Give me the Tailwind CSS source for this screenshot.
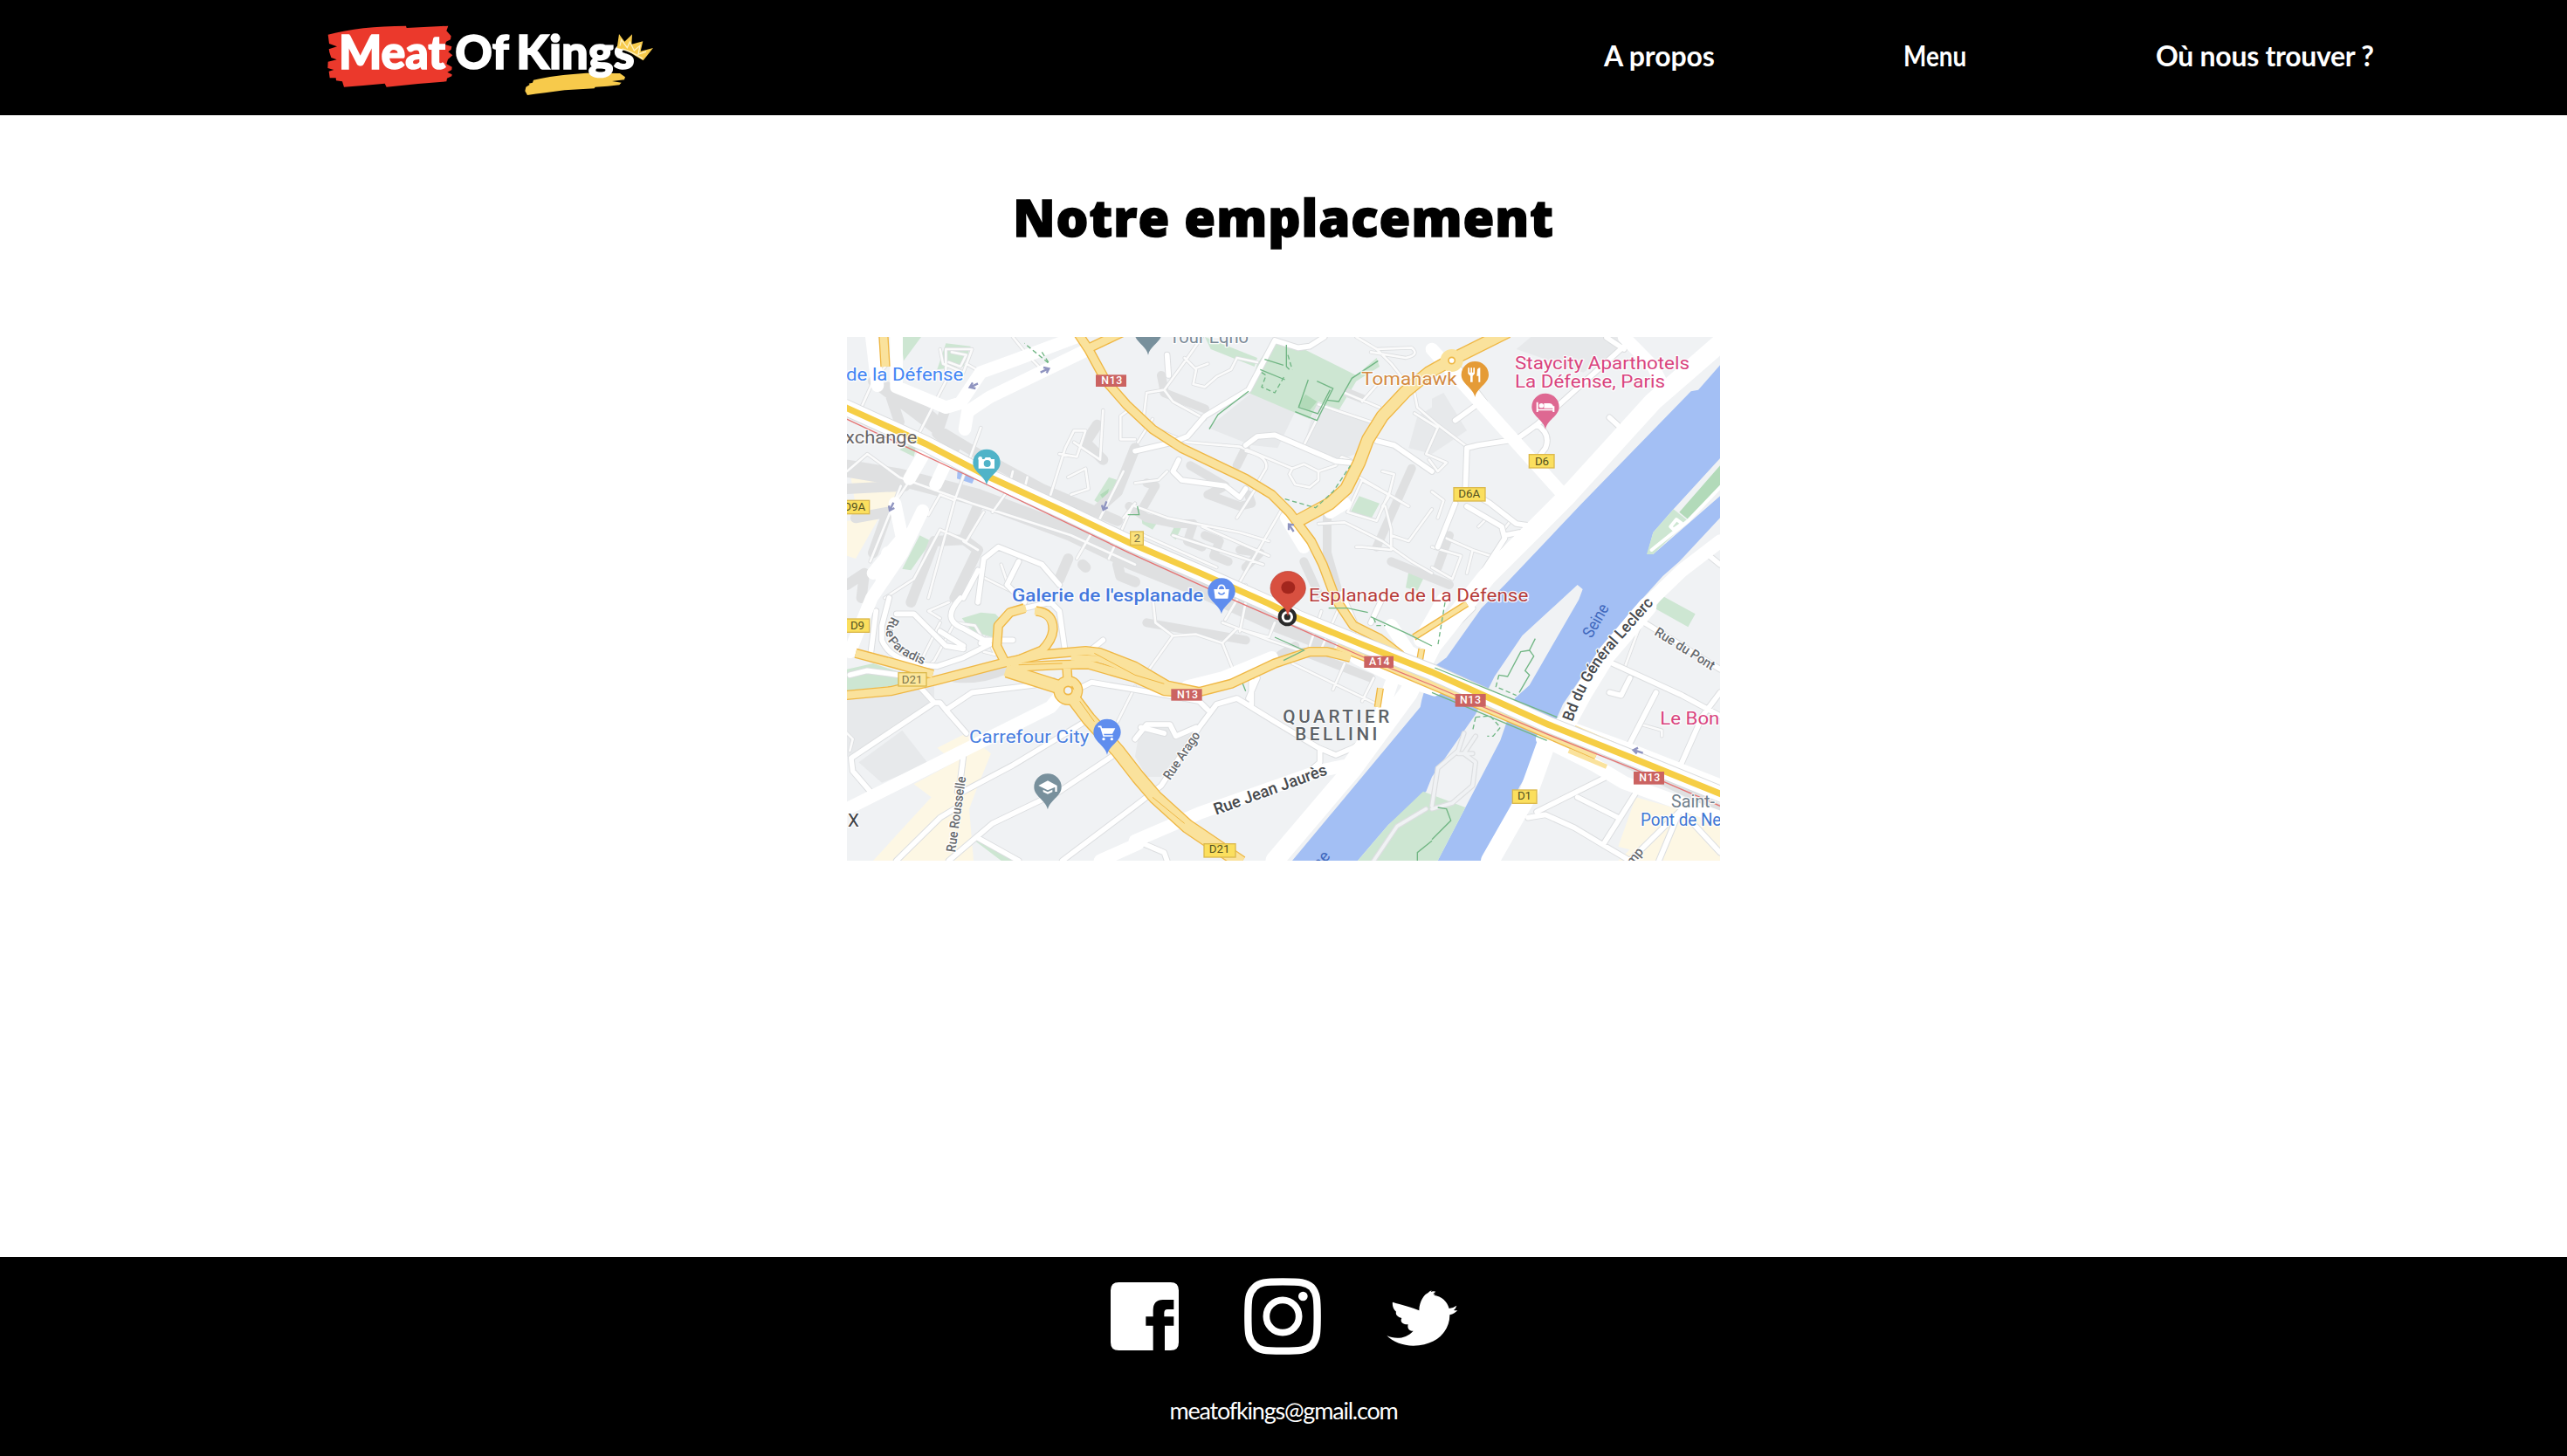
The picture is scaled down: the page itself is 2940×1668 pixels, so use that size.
<!DOCTYPE html>
<html lang="fr">
<head>
<meta charset="utf-8">
<title>Meat Of Kings</title>
<script src="https://cdn.jsdelivr.net/npm/@tailwindcss/browser@4"></script>
</head>
<body class="flex h-[1668px] w-[2940px] flex-col overflow-hidden bg-white font-[Lato,sans-serif] text-black">
<header class="flex h-[132px] shrink-0 items-center justify-between bg-black pl-[350px] pr-[221px] text-white">
  <svg class="h-[132px] w-[420px]" viewBox="0 0 1260 396" role="img" aria-label="Meat Of Kings">
    <path fill="#eb392c" d="M77 119C150 99 240 89 345 89L347 96L490 89L484 106L500 124L498 136L483 143L480 153L502 160L500 170L490 178L505 190L489 204L484 220L503 230L502 240L487 248L503 256L502 262L486 269L484 280Q380 287 278 299L272 287Q200 294 132 299L126 280L105 277L104 268L83 268L80 245L97 240L76 234L77 212L107 205L88 198L82 180L80 169L108 160L81 150Z"/>
    <path fill="#f7ca4b" d="M783 275Q850 258 965 251L1080 252L1098 265L1095 274L1053 279L1085 284L1078 292Q1040 297 995 299L992 304L890 310Q820 319 762 327L754 313L757 299L770 291L767 287L780 284Z"/>
    <g font-family="Lato" font-weight="900" font-size="158" fill="#fff" stroke="#fff" stroke-width="5">
      <text x="114" y="238" textLength="366" lengthAdjust="spacingAndGlyphs">Meat</text>
      <text x="514" y="238" textLength="184" lengthAdjust="spacingAndGlyphs">Of</text>
      <text x="724" y="238" textLength="406" lengthAdjust="spacingAndGlyphs">Kings</text>
    </g>
    <path fill="#f7ca4b" d="M1077 117L1096 143L1122 118L1120 152L1159 142L1151 176L1194 165L1160 208L1132 191Q1105 170 1070 165Z"/>
    <path fill="none" stroke="#fff1c0" stroke-width="4" d="M1080 158L1085 137L1105 164L1114 144L1129 174L1149 157L1143 187L1170 177M1088 168Q1130 182 1158 202"/>
  </svg>
  <nav class="flex items-center gap-[216px] pb-1 text-[32px] font-bold leading-none whitespace-nowrap">
    <a class="w-[127px] tracking-[-0.1px]">A propos</a>
    <a class="w-[73px] origin-left scale-x-[0.87]">Menu</a>
    <a class="w-[250px] tracking-[-0.3px]">Où nous trouver ?</a>
  </nav>
</header>

<main class="flex grow flex-col items-center">
  <h1 class="mt-[82px] h-[172px] font-['Open_Sans',sans-serif] text-[58px] font-extrabold leading-[70px] tracking-[1px] whitespace-nowrap [-webkit-text-stroke:1.5px_black]">Notre emplacement</h1>
  <svg class="h-[600px] w-[1000px]" viewBox="30 18 3000 1800">
    <defs>
      <g id="walks">
        <path stroke-width="60" d="M30 470L210 500L480 570L800 690L1010 790L1260 890L1500 1000L1680 1070"/>
        <path stroke-width="36" d="M120 170L330 330L480 420L700 540L960 650M170 190L210 310M370 260L340 350L400 400M215 200L330 300M30 540L230 530M60 640L170 620L120 760M480 600L430 715L330 720L250 930M440 720L480 750L400 915M790 780L760 850M850 810L840 800M890 320L850 380L910 440M1020 400L960 550L880 620M30 870L90 830L80 915M960 800L970 840L1020 860"/>
        <path stroke-width="30" d="M1110 150L1120 200M1120 210L1260 265M1400 400L1370 460M1210 460L1330 530L1270 560L1380 600L1420 590L1410 560M1060 520L1090 530L1050 600M1000 600L1060 640L1160 660L1220 660L1200 720L1250 740M1260 700L1310 720L1290 770L1340 790M1380 750L1450 760L1400 810M1970 470L1850 740M1680 630L1680 760L1720 900M1600 790L1650 900M1800 230L1750 210M1900 790L2100 870M2100 700L2060 810M400 1190Q490 1200 580 1160M1060 1000L1400 1060M1600 1100L1830 1190M1520 1110L1570 1080M2640 1450L3030 1640"/>
      </g>
      <g id="lanes">
        <path d="M75 270L120 170L170 110M275 355L370 170L370 60L460 60L430 140L360 110L350 60M390 70L440 80L420 120L380 105M440 110L500 145L590 90M600 18L650 80L700 130M400 580L490 330M200 580L320 400M30 480L100 420L210 500L460 590L800 700L1020 800M530 620L580 550M110 790L215 530M500 620L440 720L350 680L260 850L160 915M310 630L350 560L400 580L310 915M730 560L780 400L810 340L850 340L820 430L760 420M810 380L900 440L910 270M790 500L850 470L860 540L800 560M600 480L590 520M650 500L640 540M820 780L900 640L980 480M930 780L1010 600M980 640L1020 590M1020 370L970 370L970 290L1010 260"/>
        <path d="M1050 290L1060 210L1120 200L1200 90L1250 18M1120 200L1150 240L1260 300M1190 90L1230 130L1220 180L1260 190L1300 155L1350 130L1370 90L1440 105M1270 110L1230 125M1030 380L1080 300M1060 320L1200 380L1380 395L1560 470M1400 410Q1480 430 1470 470L1440 520M1560 470L1600 455L1650 480L1650 510L1620 535L1570 525L1550 490ZM1650 480L1710 460L1730 430L1780 450M1600 390L1650 290M1650 250L1830 310M1370 640L1440 530M1020 520L1100 510L1130 480M1380 860L1530 600L1560 630M1150 700L1460 800M1050 700L1300 810M1250 670L1480 770M1020 600L1130 640L1380 690L1480 720M1650 660L1740 655L1870 720L1970 790L2040 830M1790 500L1960 600M1750 620L1800 510L1890 560L1850 650L1750 620M1870 480L1910 490L1890 570L1870 600M2040 610L1960 720L1900 700M1880 600L1900 680L1900 750L1800 740L1780 740M2060 320L2160 395M2060 320L1990 260L1980 210L1900 110L1850 60L1780 18M1850 60L1970 55Q2000 80 1950 90L1830 70M1870 160L1800 240M1740 210L1860 260M1980 280L2060 330L2020 420L2090 450L2060 480L2030 440"/>
        <path d="M2040 550L2080 580L2060 640M2090 710L2180 750L2240 770M2040 740L2140 770L2110 850L2040 810M2280 690L2310 650M2230 640L2200 670M2180 750L2160 830M1010 920L1080 910L1090 1000L1150 1045L1230 1040L1320 1070L1360 1170M1150 1045L1040 1200M1320 1070L1370 1020L1480 1050L1500 1000M1320 1000L1480 1060L1600 1100M1560 1140L1850 1280M1700 1230L1740 1140M1800 1270L1840 1190M1660 960L1620 1080M1720 950L1660 1090M1400 930L1380 1030M1330 990L1400 870M20 1370L50 1400L40 1440M960 1340L1020 1220M470 830L590 890L560 800M480 750L430 720M240 1210L330 1130L400 1000L470 1010L500 1060M350 1000L260 1180M500 1100L540 1110L510 1050M350 985L310 960L380 930"/>
        <path d="M2755 1010L2700 1160M2760 1350L2830 1370L2830 1390"/>
      </g>
      <g id="streets">
        <path d="M1130 80L1135 150M1020 410L1150 380L1200 360L1260 290L1410 200L1500 30M1170 440L1150 480L1180 510L1330 530L1380 570L1400 540M1400 390L1440 360L1500 355L1710 445L1760 450M1500 30L1580 55L1620 50L1670 18M1850 375L1910 390L2040 480M2120 110L2220 240M2210 240L2120 305M2120 590L2060 740M2160 400L2200 390L2330 370L2400 320L2700 50M2160 400L2155 540L2240 590L2330 660L2400 670M2160 600L2280 670L2290 710L2200 850M2400 320Q2450 350 2430 400L2400 440M2650 295L2710 350M2290 700L2340 690M2640 20L2700 60M420 915Q350 990 430 1020L500 1060L600 1060M175 915L150 1010L150 1060Q180 1140 340 1150L430 1120L520 1075L490 1070M200 970L260 970L300 1010L370 1080L430 1090M130 960L110 1120M350 1030L430 1080M640 950L730 930L760 960L780 1100L860 1100L910 1060M40 1180L100 1165L210 1180M45 1470L50 1510L110 1580M45 1465L330 1275L280 1220M330 1275L350 1275L370 1300L440 1380M370 1300L460 1240L670 1215L740 1200M840 1220L870 1205L1020 1230L1190 1260"/>
        <path d="M430 1460L420 1540L410 1580M200 1818L350 1670L400 1640M430 1580L600 1490L840 1345M380 1818L530 1690L760 1580L940 1460M480 1740L620 1818M770 1818L1020 1630L1110 1560L1240 1360L1300 1280L1370 1260L1500 1340L1650 1430L1710 1455L1770 1430L1830 1390M1190 1260L1240 1270L1270 1300M1410 1260L1440 1190M1420 1200L1420 1280M1655 1440L1655 1480L1620 1510M1050 1760L1120 1790L1130 1818M1120 1380L1040 1360M1020 1400L1060 1350L1140 1350L1160 1390L1230 1360M1730 900L1800 1060L1900 1120M1830 1000L1870 915M2040 980L1990 1060M480 930L500 780L550 740L700 800L760 870M620 790L580 870L640 930M480 820L430 915M2770 1000L3030 1160M2660 1140L2900 1250L3030 1320M2720 1190L2690 1250L2650 1240M2810 1240L2720 1415M3030 1240L2970 1320L2890 1500M2400 1650L2640 1530M2540 1600L2680 1670M2750 1570L2630 1760M2370 1670L2430 1660L2530 1705L2630 1765L2720 1818M2720 1818L2890 1650L2820 1818M2900 1650L3030 1790M2980 760L3030 800M2180 950L2050 1080"/>
      </g>
      <g id="avenues">
        <path stroke-width="44" d="M115 18L135 185M200 18L200 190L370 260L420 245L490 140L600 100L820 18M435 335L445 275L520 225L850 65M300 410L245 505M375 440L335 525M195 590L220 710L120 830M290 615L220 760L115 915L40 1100M170 760L150 850M2040 60L2500 570M2700 18L2800 120L2830 180M30 1640L400 1455L730 1290L780 1230M1020 1750L1240 1655L1650 1510L1750 1490M1200 1220L1320 1190L1490 1120M900 1818L1030 1760M1540 640L1600 740M1690 620L1740 590"/>
        <path stroke-width="64" d="M3030 40L2800 240L2500 570L2230 840L2040 1080L1960 1240L1770 1500L1500 1818M2440 1395L2370 1590L2240 1818M2780 945L2640 1110L2560 1240L2500 1350"/>
        <path stroke-width="46" d="M3030 720L2900 820L2770 945M2480 1350L2700 1430L3030 1560M2420 1400L2600 1490L2700 1550L3030 1670M1900 1210L1860 1330L1760 1480M1780 1120L1900 1180L2050 1230"/>
        <path stroke-width="46" d="M1900 1010L1960 1100L2010 1130M2080 920L2000 1060"/>
      </g>
      <g id="main-roads">
        <path stroke-width="34" d="M155 0L162 120M820 0L860 60L920 170L990 250L1080 335L1180 400L1400 505L1490 560L1550 620L1625 720L1665 800L1710 920L1770 1010L1860 1055L1930 1110L1985 1170M850 62L980 0"/>
        <path stroke-width="46" d="M2300 0L2110 95L2030 140L1950 205L1870 290L1820 370L1790 450L1745 540L1690 590L1580 650"/>
        <path stroke-width="34" d="M20 1250L180 1235L330 1200L560 1140L700 1110L850 1097L900 1103L1020 1150L1130 1215L1240 1238L1350 1210L1500 1140L1620 1100L1680 1100L1760 1120"/>
        <path stroke-width="34" d="M60 1105L200 1142L325 1178M600 1153L760 1145L860 1143L1020 1190L1120 1235L1180 1240M575 1140L545 1080L550 1010L590 965L640 950M680 960Q740 965 738 1025Q735 1060 700 1095L590 1140M785 1140L790 1220"/>
        <path stroke-width="50" d="M580 1165L770 1225L800 1250L860 1330L960 1440L1030 1530L1090 1600L1200 1700L1385 1825"/>
        <path stroke-width="34" d="M1720 1082L1820 1120L2040 1213L2200 1280L2440 1383L2605 1455"/>
        <path stroke-width="24" d="M1863 1225L1853 1290M1978 1050L2160 935M2005 1090L1998 1130"/>
      </g>
      <path id="metro" d="M20 258L300 385L520 500L780 620L1000 725L1240 828L1480 935L1580 985L1800 1075L2040 1170L2440 1350L2740 1470L3040 1592"/>
      <path id="pin" stroke="none" d="M0 77C-6 45 -47 32 -47 0A47 46 0 0 1 47 0C47 32 6 45 0 77Z"/>
      <path id="leclerc" d="M2522 1342C2565 1225 2610 1145 2678 1074L2830 902"/>
      <path id="paradis" d="M184 978C158 1025 156 1055 190 1085Q230 1125 330 1158"/>
    </defs>

    <rect x="30" y="18" width="3000" height="1800" fill="#f0f2f4"/>
    <!-- blocks and built-up areas -->
    <path fill="#e7e9eb" d="M1270 330L1420 210L1570 275L1510 400L1420 390ZM1640 250L1830 310L1780 420L1720 440L1600 390ZM2380 18L2690 18L2700 50L2560 140L2330 60ZM2040 230L2080 210L2160 340L2040 420ZM1990 290L2040 260V420L1960 400ZM30 1250L330 1210L330 1280L40 1460L30 1460ZM70 1480L220 1370L310 1485L150 1550ZM1030 1400L1060 1350L1140 1360L1160 1390L1220 1380L1110 1530L1060 1530L1020 1460Z"/>
    <path fill="#fdf7e4" d="M40 480L200 510L200 640L140 640L60 780L30 770V650L140 640L60 600ZM340 1430L440 1380L525 1450L480 1560L450 1640L465 1818H120L320 1600L260 1555L400 1480ZM2740 1600L3030 1680V1818H2680L2720 1780L2680 1770Z"/>
    <path fill="#cde6d2" d="M215 18H285L225 100ZM370 40L455 50L430 120L340 130ZM1500 25L1600 60L1780 150L1850 90L1860 120L1780 170L1720 270L1650 240L1620 300L1410 210L1440 110ZM1260 18L1440 90L1430 120L1280 60ZM280 700L320 720L250 820L220 815ZM425 985L490 965L540 970L570 1000L530 1050L460 1030ZM30 1160L120 1140L210 1170V1215L30 1235ZM480 1735L620 1818H560L470 1750ZM2835 910L2945 970L2920 1015L2805 950ZM1790 565L1860 590L1830 645L1760 620ZM930 500L960 510L910 600L880 580ZM1040 620L1100 650L1080 680L1045 660ZM1160 660L1180 670L1160 715L1140 700ZM1960 825L2010 850L1990 890L1950 880ZM210 405L270 380L260 430Z"/>
    <path fill="#b2dab9" d="M1605 215L1645 240L1620 270L1580 255ZM900 560L930 540L920 590Z"/>
    <!-- river and islands -->
    <path fill="#a3bff4" d="M3030 115L2955 200L2930 205L2555 590L2290 870L2210 950L2090 1120L2035 1160L2005 1265L2000 1290L1560 1818H2210L2280 1705L2340 1565L2435 1405L2490 1280L2600 1120L2720 965L2833 840L2890 790L3030 640Z"/>
    <path fill="#f0f2f4" d="M2540 870L2558 885L2545 920L2375 1215L2325 1260L2275 1405L2155 1635L2060 1818H1785L1890 1695L2020 1580L2040 1530L2190 1315L2255 1185L2350 1045L2475 930ZM3030 435L2870 610L2800 690L2780 765L2800 765L3030 565Z"/>
    <path fill="#cde6d2" d="M1785 1818L1890 1695L2010 1580L2155 1635L2060 1818ZM2870 610L2800 690L2778 765L2800 765L2920 650Z"/>
    <path fill="#b2dab9" d="M3030 460L2890 620L2920 645L3030 540Z"/>
    <path fill="#a3bff4" d="M410 478L470 500L460 522L408 505Z"/>

    <g fill="none" stroke-linecap="round" stroke-linejoin="round">
      <g stroke="#dfe0e1"><use href="#walks"/></g>
      <g stroke="#dcdee0" stroke-width="13"><use href="#lanes"/></g>
      <g stroke="#fbfbfb" stroke-width="8"><use href="#lanes"/></g>
      <g stroke="#dcdee0" stroke-width="23"><use href="#streets"/></g>
      <g stroke="#fff" stroke-width="17"><use href="#streets"/></g>
      <g stroke="#fff"><use href="#avenues"/></g>
      <path stroke="#dcdee0" stroke-width="18" d="M2150 1380L2130 1440L2060 1500L2040 1630M2190 1390L2150 1450L2190 1480L2180 1560L2110 1620L2040 1640M2130 1450L2180 1450M1840 1818L1920 1700L2020 1640"/>
      <path stroke="#f0f2f4" stroke-width="11" d="M2150 1380L2130 1440L2060 1500L2040 1630M2190 1390L2150 1450L2190 1480L2180 1560L2110 1620L2040 1640M2130 1450L2180 1450M1840 1818L1920 1700L2020 1640"/>
      <path stroke="#fff" stroke-width="12" d="M2795 750L2920 650L3040 525M2860 670L2880 645L2900 660L2870 680Z"/>
    </g>
    <!-- yellow roads: an orange casing with the lighter fill over it -->
    <g fill="none" stroke="#efb744" stroke-linejoin="round">
      <use href="#main-roads"/>
      <circle cx="790" cy="1233" r="34" stroke-width="34"/>
    </g>
    <g fill="none" stroke="#fae29c" stroke-linejoin="round">
      <path stroke-width="26" d="M155 0L162 120M820 0L860 60L920 170L990 250L1080 335L1180 400L1400 505L1490 560L1550 620L1625 720L1665 800L1710 920L1770 1010L1860 1055L1930 1110L1985 1170M850 62L980 0"/>
      <path stroke-width="38" d="M2300 0L2110 95L2030 140L1950 205L1870 290L1820 370L1790 450L1745 540L1690 590L1570 655"/>
      <path stroke-width="26" d="M20 1250L180 1235L330 1200L560 1140L700 1110L850 1097L900 1103L1020 1150L1130 1215L1240 1238L1350 1210L1500 1140L1620 1100L1680 1100L1760 1120"/>
      <path stroke-width="26" d="M60 1105L200 1142L325 1178M600 1153L760 1145L860 1143L1020 1190L1120 1235L1180 1240M575 1140L545 1080L550 1010L590 965L645 950M675 960Q740 965 738 1025Q735 1060 700 1095L590 1140M785 1140L790 1220"/>
      <path stroke-width="42" d="M575 1163L770 1225L800 1250L860 1330L960 1440L1030 1530L1090 1600L1200 1700L1385 1825"/>
      <path stroke-width="26" d="M1715 1080L1820 1120L2040 1213L2200 1280L2440 1383L2605 1455"/>
      <path stroke-width="16" d="M1863 1225L1853 1290M1978 1050L2160 935M2005 1090L1998 1130"/>
      <circle cx="790" cy="1233" r="34" stroke-width="26"/>
      <circle cx="2108" cy="99" r="26" stroke-width="26"/>
      <path stroke-width="16" d="M2530 1360L2670 1420M2510 1440L2640 1495"/>
      <path stroke-width="20" d="M800 1120L900 1125L1020 1172L1110 1215"/>
    </g>
    <g fill="#f0f2f4" stroke="#efb744" stroke-width="5"><circle cx="790" cy="1233" r="14"/><circle cx="2108" cy="99" r="11" fill="#fff"/></g>
    <path fill="none" stroke="#efb744" stroke-width="3" d="M1080 1600L1190 1690M830 1270L880 1340M880 1105L1020 1180L1120 1210M620 1145L770 1140"/>

    <g fill="none">
      <use href="#metro" stroke="#d9dbdd" stroke-width="58"/>
      <use href="#metro" stroke="#fff" stroke-width="52"/>
      <use href="#metro" stroke="#f6ce45" stroke-width="22"/>
      <path stroke="#e57373" stroke-width="4" d="M20 296L510 525L1000 760L1365 925L1560 1010L1820 1125L2040 1215L2440 1385L2740 1505L3030 1630"/>
      <g stroke="#71b684" stroke-width="4">
        <path d="M1540 45V120L1550 130M1465 95L1530 115M1450 130L1535 165M1275 335L1305 285L1410 205M1855 100L1765 160L1720 240L1680 235M1645 170L1700 195L1645 305L1570 275M1615 165L1582 260L1648 282L1690 200M1500 1050L1600 1095L1530 1130M1685 950L1750 950L1820 965M1830 980L1960 1040L2040 1080M2050 1155L2470 1325M2040 1240L2435 1405M2395 1055L2375 1095L2390 1115L2360 1165L2375 1180L2340 1240M2375 1095L2345 1100L2300 1185L2270 1180M2060 1635L2090 1640L2105 1680L2040 1745M2040 1750L1990 1790V1818M1390 1210L1400 1235M995 629H1034L1028 600"/>
        <path stroke-dasharray="16 10" d="M1455 140L1470 150L1455 190L1500 210L1535 150M1545 80L1560 130M1535 575L1640 605L1700 550L1760 460M700 70L725 110L640 40M2270 1180L2260 1220L2330 1250M2190 1325L2180 1370M2190 1325L2240 1320L2275 1360L2250 1390H2230M1840 985L1850 1010L1880 1010M2085 930L2060 1080"/>
      </g>
      <path stroke="#8f94c0" stroke-width="7" d="M480 178L455 190M462 175L452 191L472 195M695 140L722 127M705 123L724 127L716 142M190 587L178 612M174 598L177 614L193 606M922 583L912 610M906 596L911 612L926 604M1565 687L1550 665M1548 682L1548 662L1566 664M2765 1448L2735 1438M2748 1430L2732 1438L2744 1450"/>
    </g>

    <!-- road shields -->
    <g fill="#cb6361">
      <rect x="885" y="148" width="105" height="41"/><rect x="1807" y="1115" width="101" height="40"/><rect x="1144" y="1228" width="106" height="40"/><rect x="2120" y="1245" width="105" height="44"/><rect x="2733" y="1512" width="105" height="44"/>
    </g>
    <g fill="#fff" font-family="Roboto" font-weight="500" font-size="37" text-anchor="middle" letter-spacing="2">
      <text x="941" y="181">N13</text><text x="1860" y="1146">A14</text><text x="1201" y="1259">N13</text><text x="2173" y="1278">N13</text><text x="2789" y="1546">N13</text>
    </g>
    <g fill="#fbdf5e" stroke="#dcb94c" stroke-width="4">
      <rect x="10" y="580" width="97" height="46"/><rect x="10" y="987" width="97" height="46"/><rect x="207" y="1172" width="96" height="46" fill="#fbe69c"/><rect x="1257" y="1760" width="108" height="46"/><rect x="2317" y="1575" width="83" height="46"/><rect x="2374" y="422" width="86" height="46"/><rect x="2115" y="536" width="108" height="46"/><rect x="1004" y="687" width="44" height="46" fill="#fbe27c"/>
    </g>
    <g fill="#52501f" font-family="Roboto" font-size="40" text-anchor="middle">
      <text x="56" y="616">D9A</text><text x="66" y="1022">D9</text><text x="254" y="1208" fill="#7b754b">D21</text><text x="1310" y="1792">D21</text><text x="2358" y="1608">D1</text><text x="2418" y="458">D6</text><text x="2168" y="569">D6A</text><text x="1027" y="724" fill="#7b754b">2</text>
    </g>

    <!-- place and street names -->
    <g font-family="Roboto" font-size="62" stroke="#fff" stroke-opacity="0.85" stroke-width="8" stroke-linejoin="round" paint-order="stroke">
      <g fill="#4285f4">
        <text x="27" y="168" textLength="403" lengthAdjust="spacingAndGlyphs">de la Défense</text>
        <text x="450" y="1412" fill="#4a7fe0" textLength="412" lengthAdjust="spacingAndGlyphs">Carrefour City</text>
        <text x="597" y="928" fill="#4478dd" font-weight="500" textLength="658" lengthAdjust="spacingAndGlyphs">Galerie de l'esplanade</text>
        <text x="2757" y="1698" fill="#4178d4" textLength="376" lengthAdjust="spacingAndGlyphs">Pont de Neuilly</text>
      </g>
      <text x="24" y="384" fill="#696565" textLength="247" lengthAdjust="spacingAndGlyphs">xchange</text>
      <text x="1138" y="38" fill="#7b8b98" textLength="272" lengthAdjust="spacingAndGlyphs">Tour Eqho</text>
      <text x="1798" y="182" fill="#d38a41" textLength="328" lengthAdjust="spacingAndGlyphs">Tomahawk</text>
      <g fill="#d9447e">
        <text x="2325" y="129" textLength="600" lengthAdjust="spacingAndGlyphs">Staycity Aparthotels</text>
        <text x="2325" y="192" textLength="516" lengthAdjust="spacingAndGlyphs">La Défense, Paris</text>
        <text x="2824" y="1351" textLength="204" lengthAdjust="spacingAndGlyphs">Le Bon</text>
      </g>
      <text x="1617" y="928" fill="#b73b39" textLength="754" lengthAdjust="spacingAndGlyphs">Esplanade de La Défense</text>
      <text x="2862" y="1635" fill="#6f7f8b" textLength="150" lengthAdjust="spacingAndGlyphs">Saint-</text>
      <g fill="#5d6267" stroke-width="6"><text x="1528" y="1345" font-weight="500" textLength="366">QUARTIER</text><text x="1570" y="1405" font-weight="500" textLength="282">BELLINI</text></g>
      <text x="16" y="1701" fill="#3e4145">IX</text>
      <g fill="#66696d" font-size="45" font-weight="500">
        <text font-size="43"><textPath href="#paradis" textLength="238" lengthAdjust="spacingAndGlyphs">Rue Paradis</textPath></text>
        <text transform="translate(402 1790) rotate(-82)" textLength="262" lengthAdjust="spacingAndGlyphs">Rue Rousselle</text>
        <text transform="translate(1140 1543) rotate(-56)" textLength="188" lengthAdjust="spacingAndGlyphs">Rue Arago</text>
        <text transform="translate(2802 1040) rotate(32)" textLength="234" lengthAdjust="spacingAndGlyphs">Rue du Pont</text>
        <text transform="translate(2712 1856) rotate(-50)">emp</text>
      </g>
      <g fill="#45484c" font-size="54" font-weight="500">
        <text font-size="56" transform="translate(1298 1661) rotate(-20)" textLength="410" lengthAdjust="spacingAndGlyphs">Rue Jean Jaurès</text>
        <text><textPath href="#leclerc" textLength="500" lengthAdjust="spacingAndGlyphs">Bd du Général Leclerc</textPath></text>
      </g>
      <g fill="#3f68bd" font-size="56" stroke="none">
        <text transform="translate(2588 1056) rotate(-60)" textLength="124" lengthAdjust="spacingAndGlyphs">Seine</text>
        <text transform="translate(1654 1850) rotate(-50)">ne</text>
      </g>
    </g>

    <!-- map pins -->
    <g fill="#fff">
      <g transform="translate(510 450)"><use href="#pin" fill="#50b3c8"/><path d="M-28 -12H-8L-4 -18H12L16 -12H27V20H-28Z"/><circle cx="2" cy="3" r="12" fill="#50b3c8"/><circle cx="-22" cy="-14" r="7"/></g>
      <g transform="translate(1065 3)"><use href="#pin" fill="#78909c"/></g>
      <g transform="translate(1317 893)"><use href="#pin" fill="#5f8dee"/><path d="M-26 -8H26L22 24H-22Z"/><path d="M-12 -8Q-10 -22 0 -22Q10 -22 12 -8" fill="none" stroke="#fff" stroke-width="5"/><path d="M-11 3Q0 17 11 3" fill="none" stroke="#5f8dee" stroke-width="5"/></g>
      <g transform="translate(2188 148)"><use href="#pin" fill="#e59b36"/><path d="M-24 -24H-19V-8H-15V-24H-10V-8H-6V-24H-1V-4L-8 4V25H-16V4L-24 -4ZM8 -18Q10 -24 18 -24V25H12V4H6Z"/></g>
      <g transform="translate(2430 258)"><use href="#pin" fill="#de6892"/><path d="M-31 -16H-25V8H25V-2H31V18H25V13H-25V18H-31ZM-5 5V-12H14Q27 -10 29 5Z"/><circle cx="-14" cy="-4" r="8"/></g>
      <g transform="translate(924 1377)"><use href="#pin" fill="#5f8dee"/><path fill="none" stroke="#fff" stroke-width="5" d="M-31 -20H-22L-12 12H20"/><path d="M-20 -14H28L18 5H-14Z"/><circle cx="-12" cy="23" r="5"/><circle cx="16" cy="23" r="5"/></g>
      <g transform="translate(720 1565)"><use href="#pin" fill="#78909c"/><path d="M-32 -5L0 -22L32 -5V16H25V0L0 11ZM-16 9L0 17L16 9V17L0 24L-16 17Z"/></g>
    </g>
    <circle cx="1543" cy="980" r="26" fill="#fff" stroke="#292929" stroke-width="12"/>
    <circle cx="1543" cy="980" r="11" fill="#292929"/>
    <path fill="#d85040" stroke="#b83c30" stroke-width="2" d="M1545 976C1540 935 1485 925 1485 882A60 58 0 0 1 1606 882C1606 925 1550 935 1545 976Z"/>
    <ellipse cx="1546" cy="879" rx="24" ry="22" fill="#a3261d"/>
  </svg>
</main>

<footer class="flex h-[228px] shrink-0 flex-col items-center bg-black pt-6 text-white">
  <div class="flex h-[88px] items-center gap-[75px] pl-[2px]">
    <svg class="h-[78px] w-[78px]" viewBox="0 0 234 234"><path fill="#fff" d="M28 0H206Q234 0 234 28V206Q234 234 206 234H186V149H217V118H184V106Q184 93 195 93H217V60H180Q146 60 146 96V118H121V149H146V234H28Q0 234 0 206V28Q0 0 28 0Z"/></svg>
    <svg class="h-[88px] w-[88px]" viewBox="0 0 264 264"><path fill="none" stroke="#fff" stroke-width="25" d="M132 13C70 13 52 16 36 32C15 52 13 70 13 132C13 194 15 212 36 232C52 249 70 251 132 251C194 251 212 249 232 232C249 212 251 194 251 132C251 70 249 52 232 32C212 15 194 13 132 13Z"/><circle cx="132" cy="132" r="56" fill="none" stroke="#fff" stroke-width="23"/><circle cx="202" cy="63" r="16" fill="#fff"/></svg>
    <svg class="h-[88px] w-[82px]" viewBox="1046 102 246 264"><path fill="#fff" d="M1047 300C1074 313 1112 313 1138 284C1127 285 1116 278 1120 262C1103 263 1091 254 1098 240C1083 237 1076 227 1079 218C1069 210 1065 195 1067 185C1095 194 1140 204 1158 214C1159 181 1176 158 1189 153Q1192 148 1201 145L1198 150Q1207 146 1215 149L1206 157L1214 158L1208 161C1236 165 1254 182 1261 207Q1276 205 1287 197Q1284 207 1277 213Q1284 215 1290 213Q1281 225 1263 229C1264 280 1223 334 1138 335C1102 335 1066 321 1047 300Z"/></svg>
  </div>
  <p class="mt-[45px] text-[27px] leading-[38px] tracking-[-1.2px]">meatofkings@gmail.com</p>
</footer>
</body>
</html>
